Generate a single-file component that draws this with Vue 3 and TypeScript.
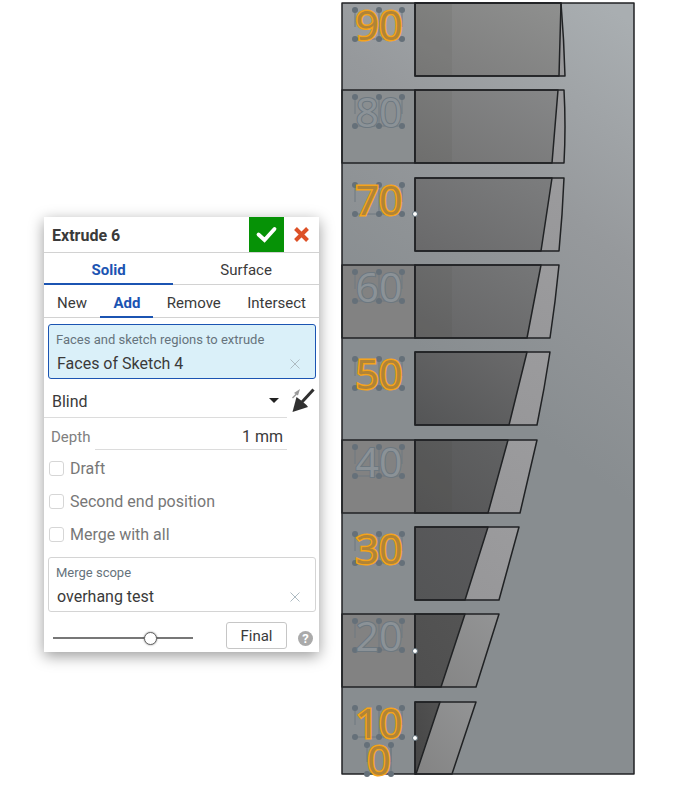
<script setup lang="ts">
import { ref } from 'vue'

interface Step {
  label: string
  top: number
  bottom: number
  innerTop: number
  innerBottom: number
  outerTop: number
  outerBottom: number
  bend: number
  shade: string
  face: string
  active: boolean
  seam: boolean
}

const bodyTypes = ['Solid', 'Surface']
const operations = ['New', 'Add', 'Remove', 'Intersect']
const bodyType = ref('Solid')
const operation = ref('Add')
const endType = ref('Blind')
const depth = ref('1 mm')
const preview = ref(72)
const options = ref([
  { id: 'draft', label: 'Draft', on: false },
  { id: 'second-end', label: 'Second end position', on: false },
  { id: 'merge-all', label: 'Merge with all', on: false },
])

const left = 415
const steps: Step[] = [
  { label: '90', top: 3, bottom: 76, innerTop: 561, innerBottom: 559, outerTop: 561, outerBottom: 565, bend: 1, shade: 's90', face: 'plain', active: true, seam: true },
  { label: '80', top: 90, bottom: 163, innerTop: 558, innerBottom: 552, outerTop: 564, outerBottom: 564, bend: 2, shade: 's80', face: 'plain', active: false, seam: true },
  { label: '70', top: 178, bottom: 251, innerTop: 552, innerBottom: 541, outerTop: 564, outerBottom: 559, bend: 1, shade: 's70', face: 'plain', active: true, seam: false },
  { label: '60', top: 265, bottom: 338, innerTop: 541, innerBottom: 527, outerTop: 559, outerBottom: 550, bend: 1, shade: 's60', face: 'dim', active: false, seam: true },
  { label: '50', top: 352, bottom: 425, innerTop: 527, innerBottom: 509, outerTop: 550, outerBottom: 537, bend: 1, shade: 's50', face: 'dim', active: true, seam: false },
  { label: '40', top: 440, bottom: 513, innerTop: 508, innerBottom: 488, outerTop: 537, outerBottom: 520, bend: 0, shade: 's40', face: 'dim', active: false, seam: true },
  { label: '30', top: 527, bottom: 600, innerTop: 488, innerBottom: 465, outerTop: 519, outerBottom: 499, bend: 0, shade: 's30', face: 'dim', active: true, seam: false },
  { label: '20', top: 614, bottom: 687, innerTop: 465, innerBottom: 441, outerTop: 499, outerBottom: 476, bend: 0, shade: 's20', face: 'dim', active: false, seam: false },
  { label: '10', top: 702, bottom: 774, innerTop: 440, innerBottom: 416, outerTop: 476, outerBottom: 452, bend: 0, shade: 's10', face: 'dim', active: true, seam: false },
]

const shades = [
  { id: 's90', from: '#7b7b7b', to: '#8f908f' },
  { id: 's80', from: '#737373', to: '#868788' },
  { id: 's70', from: '#69696a', to: '#7c7d7e' },
  { id: 's60', from: '#646465', to: '#767778' },
  { id: 's50', from: '#545556', to: '#6b6b6c' },
  { id: 's40', from: '#555556', to: '#616263' },
  { id: 's30', from: '#545556', to: '#5a5a5c' },
  { id: 's20', from: '#4f4f4f', to: '#545454' },
  { id: 's10', from: '#454545', to: '#525252' },
]

const marks = steps.map((s, i) => {
  const y = Math.round(10 + i * 87.3)
  return { text: s.label, active: s.active, xs: [355, 379, 402], top: y, bottom: y + 29 }
})
marks.push({ text: '0', active: true, xs: [367, 391], top: 745, bottom: 774 })

const outline = (s: Step) => {
  const mid = (s.outerTop + s.outerBottom) / 2 + s.bend
  return `M${left} ${s.top}H${s.outerTop}Q${mid} ${(s.top + s.bottom) / 2} ${s.outerBottom} ${s.bottom}H${left}Z`
}
const floor = (s: Step) => `M${left} ${s.top}H${s.innerTop}L${s.innerBottom} ${s.bottom}H${left}Z`
</script>

<template>
  <main class="workspace">
    <form class="dialog" aria-label="Extrude 6" @submit.prevent>
      <header class="head">
        <h1 class="title">Extrude 6</h1>
        <button class="accept" type="submit" aria-label="Accept">
          <svg viewBox="0 0 35 35"><path d="M9.500 17.500l6 5.500L25.500 12" fill="none" stroke="#fff" stroke-width="3.800" stroke-linecap="round" /></svg>
        </button>
        <button class="cancel" type="button" aria-label="Cancel">
          <svg viewBox="0 0 35 35"><path d="M11.500 11.500l12 12m0-12l-12 12" stroke="#dd5127" stroke-width="4" /></svg>
        </button>
      </header>

      <nav class="tabs types">
        <button v-for="t in bodyTypes" :key="t" type="button" class="tab" :class="{ on: bodyType === t }" @click="bodyType = t">{{ t }}</button>
      </nav>
      <nav class="tabs ops">
        <button v-for="o in operations" :key="o" type="button" class="tab" :class="{ on: operation === o }" @click="operation = o">{{ o }}</button>
      </nav>

      <section class="pick focused">
        <h2 class="caption">Faces and sketch regions to extrude</h2>
        <div class="entry">
          <span>Faces of Sketch 4</span>
          <button class="clear" type="button" aria-label="Clear faces"><svg viewBox="0 0 10 10"><path d="M0.500 0.500l9 9m0-9l-9 9" /></svg></button>
        </div>
      </section>

      <div class="end">
        <div class="drop">
          <select v-model="endType" aria-label="End type">
            <option>Blind</option>
          </select>
          <svg class="caret" viewBox="0 0 10 5"><path d="M0 0h10L5 5z" fill="#222" /></svg>
        </div>
        <button class="flip" type="button" aria-label="Opposite direction">
          <svg viewBox="0 0 24 26">
            <path d="M0.500 10l4-4" stroke="#999" stroke-width="1.500" />
            <path d="M2 5l6-4-2 6.500z" fill="#999" />
            <path d="M21.500 1.500L10 14" stroke="#303030" stroke-width="3" />
            <path d="M0.500 24L4.500 9l4 3 6 5 1.500 2z" fill="#303030" />
          </svg>
        </button>
      </div>

      <div class="depth">
        <label for="depth">Depth</label>
        <input id="depth" v-model="depth" type="text" />
      </div>

      <div class="checks">
        <label v-for="o in options" :key="o.id" class="check" :for="o.id">
          <input :id="o.id" v-model="o.on" type="checkbox" />
          <span>{{ o.label }}</span>
        </label>
      </div>

      <section class="pick">
        <h2 class="caption">Merge scope</h2>
        <div class="entry">
          <span>overhang test</span>
          <button class="clear" type="button" aria-label="Clear scope"><svg viewBox="0 0 10 10"><path d="M0.500 0.500l9 9m0-9l-9 9" /></svg></button>
        </div>
      </section>

      <footer class="foot">
        <input v-model="preview" class="slider" type="range" min="0" max="100" aria-label="Preview opacity" />
        <button class="final" type="button">Final</button>
        <button class="help" type="button" aria-label="Help">?</button>
      </footer>
    </form>

    <svg class="model" viewBox="341 0 294 778" role="img" aria-label="Overhang test part">
      <defs>
        <linearGradient id="body" gradientUnits="userSpaceOnUse" x1="640" y1="30" x2="410" y2="340">
          <stop offset="0" stop-color="#a9aeb1" />
          <stop offset="0.500" stop-color="#96999c" />
          <stop offset="1" stop-color="#888d90" />
        </linearGradient>
        <linearGradient id="strip" x1="0" y1="1" x2="1" y2="0">
          <stop offset="0" stop-color="#959597" />
          <stop offset="1" stop-color="#9b9b9d" />
        </linearGradient>
        <linearGradient id="lowstrip" x1="0" y1="1" x2="1" y2="0">
          <stop offset="0" stop-color="#838383" />
          <stop offset="1" stop-color="#939495" />
        </linearGradient>
        <linearGradient v-for="s in shades" :id="s.id" :key="s.id" x1="0" y1="1" x2="1" y2="0">
          <stop offset="0" :stop-color="s.from" />
          <stop offset="1" :stop-color="s.to" />
        </linearGradient>
      </defs>

      <rect x="342" y="3" width="292" height="771" fill="url(#body)" />
      <template v-for="(s, i) in steps" :key="s.label">
        <rect v-if="!s.active" x="342" :y="s.top" width="73" :height="s.bottom - s.top" :fill="s.face === 'dim' ? '#828282' : '#8a8e90'" class="edge" />
        <path :d="outline(s)" :fill="i > 6 ? 'url(#lowstrip)' : 'url(#strip)'" />
        <path :d="floor(s)" :fill="`url(#${s.shade})`" />
        <rect v-if="s.seam" :x="left" :y="s.top" width="37" :height="s.bottom - s.top" fill="#403d39" fill-opacity="0.080" />
        <path :d="floor(s)" class="edge" />
        <path :d="outline(s)" class="edge" />
      </template>
      <rect x="342" y="3" width="292" height="771" class="edge frame" />

      <g v-for="m in marks" :key="m.top" class="mark" :class="{ active: m.active }">
        <path :d="`M${m.xs[0]} ${m.bottom - 12}V${m.top}M${m.xs[1]} ${m.top}V${m.bottom}M${m.xs[m.xs.length - 1]} ${m.top}v17`" class="guide" />
        <path :d="`M${m.xs[0]} ${m.bottom}H${m.xs[m.xs.length - 1]}`" class="guide" />
        <template v-for="x in m.xs" :key="x">
          <circle :cx="x" :cy="m.top" r="3" />
          <circle :cx="x" :cy="m.bottom" r="3" />
        </template>
        <text x="379" :y="m.bottom + 1" text-anchor="middle">{{ m.text }}</text>
      </g>
      <circle v-for="y in [214, 651, 738]" :key="y" cx="415" :cy="y" r="2.500" class="vertex" />
    </svg>
  </main>
</template>

<style>
body {
  margin: 0;
  background: #fff;
}
</style>

<style scoped>
* {
  box-sizing: border-box;
}
.workspace {
  display: flex;
  align-items: flex-start;
  gap: 22px;
  padding: 0 58px 0 44px;
  font-family: Roboto, 'Liberation Sans', sans-serif;
  font-size: 16px;
  line-height: 20px;
  color: #3a3a3a;
}
.dialog {
  flex: 0 0 275px;
  min-width: 0;
  margin-top: 217px;
  background: #fff;
  box-shadow: 0 4px 14px rgba(0, 0, 0, 0.4);
}
button,
input,
select {
  font: inherit;
  color: inherit;
  margin: 0;
  padding: 0;
  border: 0;
  border-radius: 0;
  background: none;
}
button svg {
  display: block;
  width: 100%;
}
.head {
  display: flex;
  height: 36px;
  border-bottom: 1px solid #d2d2d2;
}
.title {
  flex: 1;
  margin: 0;
  padding: 0 8px;
  font-size: 16px;
  font-weight: 700;
  line-height: 37px;
}
.accept,
.cancel {
  width: 35px;
  height: 35px;
}
.accept {
  background: #069206;
}
.tabs {
  display: flex;
  height: 32px;
  border-bottom: 1px solid #d2d2d2;
  font-size: 15px;
}
.tab {
  height: 32px;
  padding-top: 4px;
  border-bottom: 2px solid transparent;
}
.tab.on {
  color: #1b54b2;
  border-color: #1b54b2;
  font-weight: 700;
}
.types .tab {
  flex: 53;
}
.types .tab:first-child {
  flex: 47;
}
.ops {
  height: 33px;
  justify-content: space-between;
}
.ops .tab {
  height: 33px;
  padding: 4px 13px 0;
}
.pick {
  margin: 0 3px 0 4px;
  height: 55px;
  padding: 5px 15px 0 7px;
  border: 1px solid #d4d4d4;
  border-radius: 3px;
}
.pick.focused {
  margin-top: 6px;
  background: #daf0f9;
  border-color: #1b54b2;
}
.caption {
  margin: 0;
  font-size: 13px;
  font-weight: 400;
  line-height: 20px;
  color: #66737c;
}
.entry {
  display: flex;
  justify-content: space-between;
  align-items: center;
  height: 27px;
  padding-left: 1px;
}
.clear {
  width: 10px;
  height: 10px;
}
.clear path {
  stroke: #aebbc2;
}
.end {
  display: flex;
  height: 39px;
}
.drop {
  flex: 1;
  display: grid;
  align-items: center;
  border-bottom: 1px solid #dcdcdc;
}
.drop select,
.caret {
  grid-area: 1 / 1;
}
.drop select {
  appearance: none;
  width: 100%;
  height: 38px;
  padding: 7px 8px 0;
}
.caret {
  justify-self: end;
  width: 10px;
  margin: 4px 8px 0;
  pointer-events: none;
}
.flip {
  width: 24px;
  height: 26px;
  margin: 9px 3px 0 5px;
}
.depth {
  display: flex;
  align-items: center;
  gap: 5px;
  height: 32px;
  padding: 0 32px 0 7px;
}
.depth label {
  padding-top: 6px;
  font-size: 15px;
  color: #808080;
}
.depth input {
  flex: 1;
  min-width: 0;
  height: 32px;
  padding: 6px 4px 0 0;
  border-bottom: 1px solid #dcdcdc;
  text-align: right;
}
.checks {
  padding: 2px 5px 6px;
}
.check {
  display: flex;
  align-items: center;
  gap: 6px;
  height: 33px;
  color: #777;
}
.check input {
  appearance: none;
  width: 15px;
  height: 15px;
  border: 1px solid #d6d6d6;
  border-radius: 3px;
}
.foot {
  display: flex;
  align-items: flex-start;
  height: 40px;
  padding: 10px 6px 0 9px;
}
.slider {
  appearance: none;
  flex: 1;
  min-width: 0;
  height: 13px;
  margin: 9px 33px 0 0;
}
.slider::-webkit-slider-runnable-track {
  height: 2px;
  background: #777;
}
.slider::-webkit-slider-thumb {
  appearance: none;
  width: 13px;
  height: 13px;
  margin-top: -5px;
  border: 1px solid #666;
  border-radius: 50%;
  background: #fff;
  box-shadow: 0 0 2px rgba(0, 0, 0, 0.5);
}
.final {
  width: 61px;
  height: 27px;
  border: 1px solid #c6c6c6;
  border-radius: 3px;
  font-size: 15px;
}
.help {
  width: 15px;
  height: 15px;
  margin: 9px 0 0 11px;
  border-radius: 50%;
  background: #aaa;
  color: #fff;
  font-size: 13px;
  font-weight: 700;
  line-height: 15px;
}
.model {
  flex: 1;
  min-width: 0;
  display: block;
  overflow: visible;
}
.edge {
  stroke: #202224;
  stroke-width: 1.5;
  stroke-linejoin: round;
}
path.edge,
.frame {
  fill: none;
}
.mark circle {
  fill: #657079;
}
.guide {
  fill: none;
  stroke: #6f7980;
}
.mark text {
  font-family: 'Open Sans', 'Noto Sans', sans-serif;
  font-size: 41px;
  paint-order: stroke;
  fill: #8b9297;
  stroke: #6d7880;
  stroke-width: 2;
}
.mark.active text {
  fill: #b08437;
  stroke: #f5a31b;
  stroke-width: 3;
}
.vertex {
  fill: #fff;
  stroke: #5f6e78;
}
</style>
